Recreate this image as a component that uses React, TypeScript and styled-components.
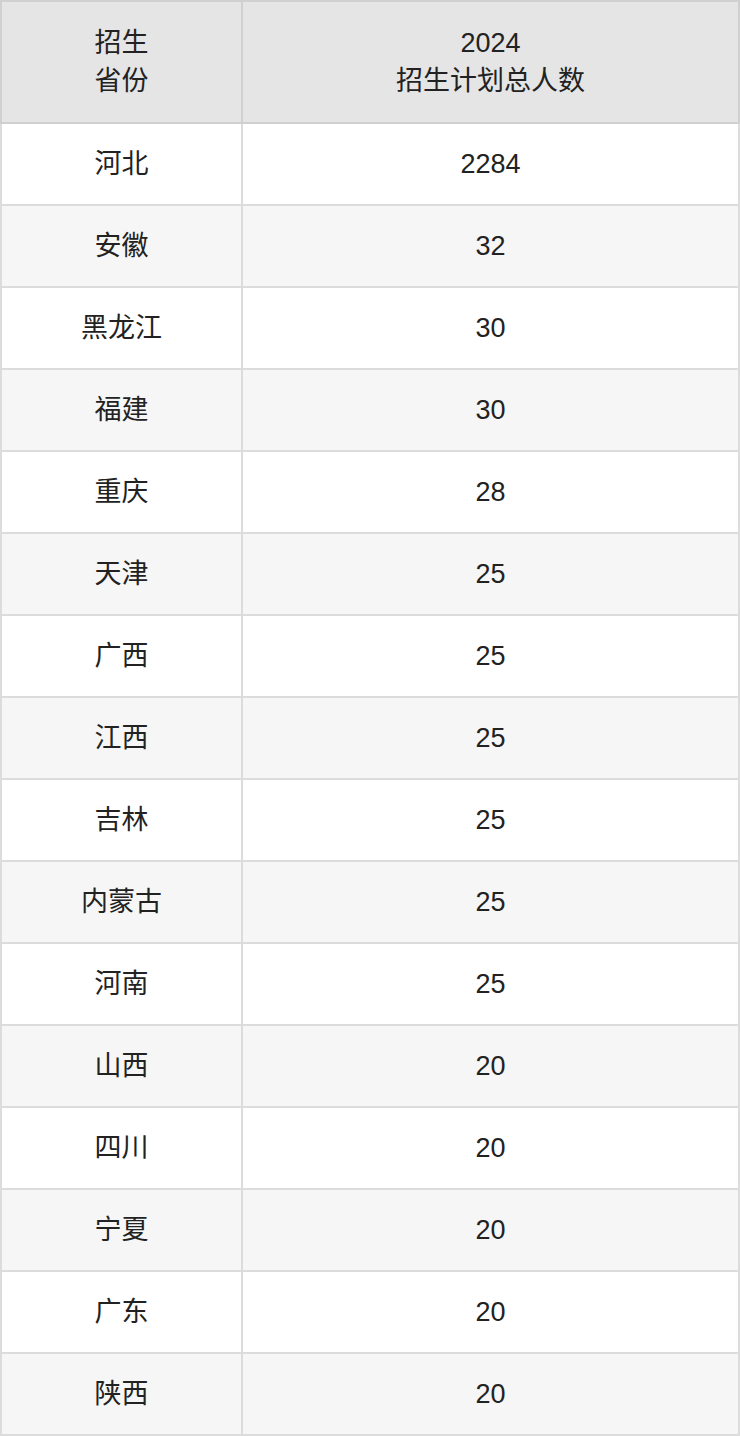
import React from 'react';
import styled, { createGlobalStyle } from 'styled-components';

const GlobalStyle = createGlobalStyle`
    html, body {
        margin: 0;
        padding: 0;
        background: #ffffff;
    }
    body {
        font-family: "Liberation Sans", Arial, "Noto Sans CJK SC", sans-serif;
    }
`

const Table = styled.table`
    width: 740px;
    table-layout: fixed;
    border-collapse: collapse;
    border: 2px solid #d4d4d4;
    color: #222222;
    font-size: 27px;
    text-align: center;
`

const HeadCell = styled.th<{ $narrow?: boolean }>`
    width: ${p => (p.$narrow ? '241px' : 'auto')};
    height: 122px;
    padding: 0;
    background: #e5e5e5;
    border: 2px solid #d0d0d0;
    font-weight: normal;
    line-height: 38px;
    box-sizing: border-box;
`

const Row = styled.tr<{ $shade: boolean }>`
    background: ${p => (p.$shade ? '#f6f6f6' : '#ffffff')};
`

const Cell = styled.td`
    height: 80px;
    padding: 0;
    border: 2px solid #dcdcdc;
    line-height: 38px;
`

const rows: [string, string][] = [
    ['河北', '2284'],
    ['安徽', '32'],
    ['黑龙江', '30'],
    ['福建', '30'],
    ['重庆', '28'],
    ['天津', '25'],
    ['广西', '25'],
    ['江西', '25'],
    ['吉林', '25'],
    ['内蒙古', '25'],
    ['河南', '25'],
    ['山西', '20'],
    ['四川', '20'],
    ['宁夏', '20'],
    ['广东', '20'],
    ['陕西', '20'],
];

export default function App() {
    return (
        <>
            <GlobalStyle />
            <Table>
                <thead>
                    <tr>
                        <HeadCell $narrow>招生<br />省份</HeadCell>
                        <HeadCell>2024<br />招生计划总人数</HeadCell>
                    </tr>
                </thead>
                <tbody>
                    {rows.map(([prov, num], i) => (
                        <Row key={prov} $shade={i % 2 === 1}>
                            <Cell>{prov}</Cell>
                            <Cell>{num}</Cell>
                        </Row>
                    ))}
                </tbody>
            </Table>
        </>
    )
}
